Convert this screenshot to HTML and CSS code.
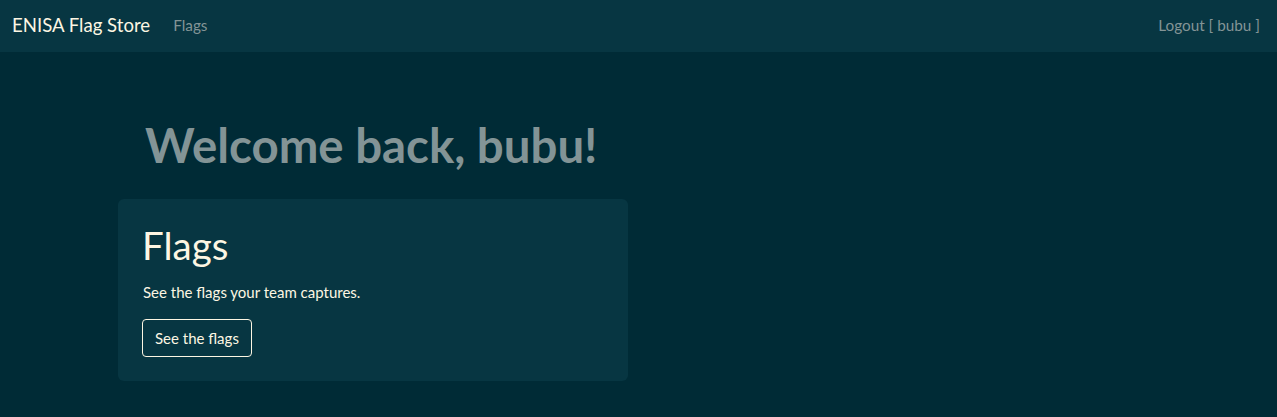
FILE: index.html
```html
<!DOCTYPE html>
<html lang="en">
<head>
<meta charset="utf-8">
<title>ENISA Flag Store</title>
<link rel="stylesheet" href="styles.css">
</head>
<body>
<nav class="navbar">
  <div class="nav-left">
    <a class="brand" href="#">ENISA Flag Store</a>
    <a class="nav-link" href="#">Flags</a>
  </div>
  <a class="nav-link" href="#">Logout [ bubu ]</a>
</nav>
<main class="main">
  <h1 class="welcome">Welcome back, bubu!</h1>
  <section class="card">
    <h2 class="card-title">Flags</h2>
    <p class="card-text">See the flags your team captures.</p>
    <a class="btn" href="#">See the flags</a>
  </section>
</main>
</body>
</html>
```
FILE: styles.css
```css
* { box-sizing: border-box; }
html, body { margin: 0; padding: 0; }
body {
  background: #002b36;
  color: #fdf6e3;
  font-family: Lato, "Open Sans", sans-serif;
  font-size: 16px;
  height: 417px;
  overflow: hidden;
}
a { text-decoration: none; }
.navbar {
  height: 52px;
  background: #073642;
  display: flex;
  align-items: center;
  justify-content: space-between;
  padding: 0 17px 2px 12px;
}
.nav-left { display: flex; align-items: center; }
.brand {
  color: #fdf6e3;
  font-size: 18.6px;
  margin-right: 23px;
}
.nav-link {
  color: #839496;
  font-size: 15.3px;
}
.main {
  padding: 64px 0 0 118px;
  width: 628px;
}
.welcome {
  margin: 0 0 25px 27px;
  font-size: 47.4px;
  font-weight: 700;
  line-height: 58px;
  color: #839496;
}
.card {
  background: #073642;
  border-radius: 6px;
  padding: 22px 24px 24px 24px;
  height: 182px;
}
.card-title {
  margin: 0 0 12px 0;
  font-size: 38.5px;
  font-weight: 400;
  line-height: 48px;
}
.card-text {
  margin: 0 0 16px 1px;
  font-size: 15px;
  line-height: 22px;
}
.btn {
  display: inline-block;
  color: #fdf6e3;
  border: 1px solid #fdf6e3;
  border-radius: 4px;
  padding: 7px 12px;
  font-size: 15px;
  line-height: 22px;
}
```
